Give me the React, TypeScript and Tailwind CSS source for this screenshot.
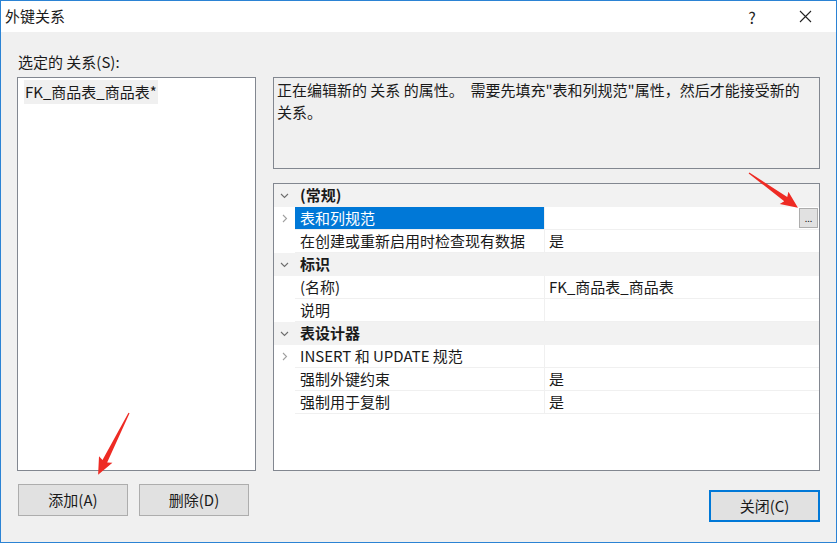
import React from 'react';

type Row =
  | { kind: 'cat'; name: string }
  | { kind: 'prop'; name: string; value?: string; expandable?: boolean; selected?: boolean };

const rows: Row[] = [
  { kind: 'cat', name: '(常规)' },
  { kind: 'prop', name: '表和列规范', expandable: true, selected: true },
  { kind: 'prop', name: '在创建或重新启用时检查现有数据', value: '是' },
  { kind: 'cat', name: '标识' },
  { kind: 'prop', name: '(名称)', value: 'FK_商品表_商品表' },
  { kind: 'prop', name: '说明' },
  { kind: 'cat', name: '表设计器' },
  { kind: 'prop', name: 'INSERT 和 UPDATE 规范', expandable: true },
  { kind: 'prop', name: '强制外键约束', value: '是' },
  { kind: 'prop', name: '强制用于复制', value: '是' },
];

const ChevronDown = () => (
  <svg width="9" height="6" viewBox="0 0 9 6" fill="none">
    <path d="M1 1 L4.5 4.5 L8 1" stroke="#6d6d6d" strokeWidth="1.1" />
  </svg>
);

const ChevronRight = () => (
  <svg width="6" height="9" viewBox="0 0 6 9" fill="none">
    <path d="M1 1 L4.5 4.5 L1 8" stroke="#a0a0a0" strokeWidth="1.1" />
  </svg>
);

const Arrow = ({ x, y, angle, len }: { x: number; y: number; angle: number; len: number }) => (
  <polygon
    transform={`translate(${x} ${y}) rotate(${angle})`}
    points={`0,-0.6 ${len - 15},-2.6 ${len - 17},-7.5 ${len},0 ${len - 17},7.5 ${len - 15},2.6 0,0.6`}
    fill="#ee2b24"
  />
);

const Btn = ({ label, primary }: { label: string; primary?: boolean }) => (
  <div
    className={`h-[32px] flex items-center justify-center bg-[#e1e1e1] text-[15px] text-[#1a1a1a] ${
      primary ? 'w-[111px] border-2 border-[#0078d7]' : 'w-[110px] border border-[#adadad]'
    }`}
  >
    {label}
  </div>
);

export default function App() {
  return (
    <div
      className="relative w-[837px] h-[543px] border border-[#2b83d4] bg-[#f0f0f0] flex flex-col text-[#1a1a1a] overflow-hidden"
      style={{ fontFamily: '"Microsoft YaHei", "Noto Sans CJK SC", "Noto Sans", sans-serif' }}
    >
      {/* title bar */}
      <div className="h-[31px] bg-white flex items-center pl-[4px] text-[15px]">
        <span>外键关系</span>
        <div className="flex-1" />
        <span className="w-[20px] text-center mr-[37px] text-[16px] text-[#222]">?</span>
        <svg width="13" height="13" viewBox="0 0 13 13" className="mr-[24px]">
          <path d="M1 1 L12 12 M12 1 L1 12" stroke="#222" strokeWidth="1.1" />
        </svg>
      </div>

      <div className="flex px-[16px] gap-[17px]">
        {/* left column */}
        <div className="w-[239px] flex flex-col">
          <div className="h-[20px] mt-[20px] mb-[5px] text-[15px] leading-[20px] pl-[1px]">选定的 关系(S):</div>
          <div className="h-[394px] bg-white border border-[#828790] pt-[1px] pl-[6px]">
            <span className="inline-block h-[24px] leading-[24px] px-[1px] bg-[#f0f0f0] text-[15px]">
              FK_商品表_商品表*
            </span>
          </div>
          <div className="flex gap-[11px] mt-[13px] pl-[1px]">
            <Btn label="添加(A)" />
            <Btn label="删除(D)" />
          </div>
        </div>

        {/* right column */}
        <div className="w-[547px] flex flex-col">
          <div className="mt-[45px] h-[92px] border border-[#828790] bg-[#f0f0f0] px-[3px] pt-[1px] text-[15px] leading-[22px]">
            正在编辑新的 关系 的属性。&nbsp; 需要先填充"表和列规范"属性，然后才能接受新的
            <br />
            关系。
          </div>
          <div className="mt-[14px] h-[288px] bg-white border border-[#828790] flex flex-col">
            {rows.map((r, i) =>
              r.kind === 'cat' ? (
                <div key={i} className="h-[23px] flex items-center bg-[#f2f2f2] text-[15px] font-bold">
                  <div className="w-[21px] flex items-center justify-center">
                    <ChevronDown />
                  </div>
                  <span className="pl-[5px]">{r.name}</span>
                </div>
              ) : (
                <div key={i} className="h-[23px] flex text-[15px]">
                  <div className="w-[21px] flex items-center justify-center">
                    {r.expandable && <ChevronRight />}
                  </div>
                  <div
                    className={`w-[250px] flex items-center pl-[5px] border-b border-r border-[#f0f0f0] ${
                      r.selected ? 'bg-[#0078d7] text-white' : ''
                    }`}
                  >
                    {r.name}
                  </div>
                  <div className="flex-1 flex items-center pl-[4px] pr-[1px] border-b border-[#f0f0f0]">
                    <span className="flex-1">{r.value}</span>
                    {r.selected && (
                      <div className="w-[19px] h-[20px] bg-[#e1e1e1] border border-[#adadad] flex items-end justify-center text-[9px] leading-[14px] pb-[1px]">
                        ...
                      </div>
                    )}
                  </div>
                </div>
              )
            )}
          </div>
          <div className="flex justify-end mt-[19px]">
            <Btn label="关闭(C)" primary />
          </div>
        </div>
      </div>

      {/* red annotation arrows */}
      <svg className="absolute left-0 top-0 pointer-events-none" width="837" height="543">
        <Arrow x={748} y={172} angle={35.3} len={60} />
        <Arrow x={128} y={412} angle={116.6} len={69} />
      </svg>
    </div>
  );
}
